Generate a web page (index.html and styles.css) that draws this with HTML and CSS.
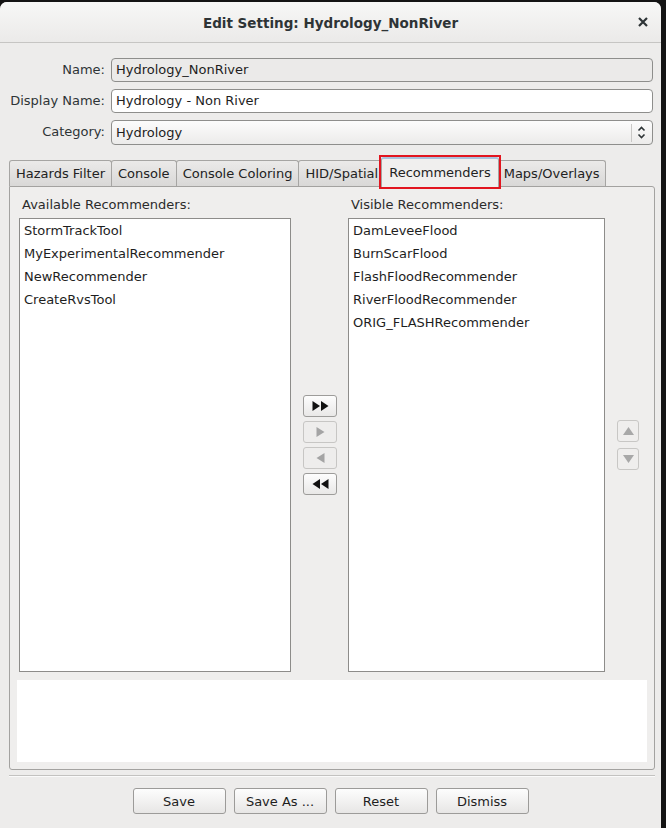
FILE: index.html
```html
<!DOCTYPE html>
<html lang="en">
<head>
    <meta charset="UTF-8">
    <title>Edit Setting: Hydrology_NonRiver</title>
    <link rel="stylesheet" href="styles.css">
</head>
<body>

    <div class="dialog">
        <div class="titlebar">
            <span></span>
            <span class="title">Edit Setting: Hydrology_NonRiver</span>
            <svg class="close" width="10" height="10" viewBox="0 0 10 10">
                <path d="M1 1 L9 9 M9 1 L1 9" stroke="#2e3436" stroke-width="2.2"/>
            </svg>
        </div>

        <div class="form">
            <label>Name:</label>
            <div class="field disabled">Hydrology_NonRiver</div>
            <label>Display Name:</label>
            <div class="field">Hydrology - Non River</div>
            <label>Category:</label>
            <div class="field combo">
                <span class="combo-text">Hydrology</span>
                <span class="combo-sep"></span>
                <svg class="combo-arrows" width="9" height="15" viewBox="0 0 9 15">
                    <path d="M1.5 5.5 L4.5 2.5 L7.5 5.5" fill="none" stroke="#2e3436" stroke-width="1.6"/>
                    <path d="M1.5 9.5 L4.5 12.5 L7.5 9.5" fill="none" stroke="#2e3436" stroke-width="1.6"/>
                </svg>
            </div>
        </div>

        <div class="tabbar">
            <div class="tab">Hazards Filter</div>
            <div class="tab">Console</div>
            <div class="tab">Console Coloring</div>
            <div class="tab">HID/Spatial</div>
            <div class="tab selected">Recommenders<span class="highlight"></span></div>
            <div class="tab">Maps/Overlays</div>
        </div>

        <div class="panel">
            <div class="lists">
                <div class="list-label">Available Recommenders:</div>
                <div></div>
                <div class="list-label">Visible Recommenders:</div>
                <div></div>

                <ul class="list">
                    <li>StormTrackTool</li>
                    <li>MyExperimentalRecommender</li>
                    <li>NewRecommender</li>
                    <li>CreateRvsTool</li>
                </ul>

                <div class="move-buttons">
                    <button class="arrow-btn">
                        <svg width="17" height="10" viewBox="0 0 17 10"><polygon points="0.5,0 8,5 0.5,10" fill="#111"/><polygon points="9,0 16.5,5 9,10" fill="#111"/></svg>
                    </button>
                    <button class="arrow-btn off">
                        <svg width="9" height="10" viewBox="0 0 9 10"><polygon points="0.5,0 8.5,5 0.5,10" fill="#a4a4a4"/></svg>
                    </button>
                    <button class="arrow-btn off">
                        <svg width="9" height="10" viewBox="0 0 9 10"><polygon points="8.5,0 0.5,5 8.5,10" fill="#a4a4a4"/></svg>
                    </button>
                    <button class="arrow-btn">
                        <svg width="17" height="10" viewBox="0 0 17 10"><polygon points="8,0 0.5,5 8,10" fill="#111"/><polygon points="16.5,0 9,5 16.5,10" fill="#111"/></svg>
                    </button>
                </div>

                <ul class="list">
                    <li>DamLeveeFlood</li>
                    <li>BurnScarFlood</li>
                    <li>FlashFloodRecommender</li>
                    <li>RiverFloodRecommender</li>
                    <li>ORIG_FLASHRecommender</li>
                </ul>

                <div class="order-buttons">
                    <button class="order-btn">
                        <svg width="11" height="8" viewBox="0 0 11 8"><polygon points="5.5,0 11,8 0,8" fill="#a8a8a8"/></svg>
                    </button>
                    <button class="order-btn">
                        <svg width="11" height="8" viewBox="0 0 11 8"><polygon points="0,0 11,0 5.5,8" fill="#a8a8a8"/></svg>
                    </button>
                </div>
            </div>

            <div class="notes"></div>
        </div>

        <div class="separator"></div>

        <div class="actions">
            <button class="btn">Save</button>
            <button class="btn">Save As ...</button>
            <button class="btn">Reset</button>
            <button class="btn">Dismiss</button>
        </div>
    </div>

</body>
</html>
```

FILE: styles.css
```css
* {
    margin: 0;
    padding: 0;
    box-sizing: border-box;
}

body {
    font-family: 'DejaVu Sans', 'Liberation Sans', sans-serif;
    font-size: 13px;
    color: #2e3436;
    background-color: #141414;
    overflow: hidden;
}

/* Dialog frame */
.dialog {
    width: 661px;
    height: 826px;
    margin-top: 2px;
    background: #edeceb;
    border-radius: 7px 7px 0 0;
    overflow: hidden;
}

.titlebar {
    height: 41px;
    display: grid;
    grid-template-columns: 1fr auto 1fr;
    align-items: center;
    background: linear-gradient(#f7f7f6, #ebeae9);
    border-bottom: 1px solid #c6c5c3;
}

.title {
    font-weight: bold;
    font-size: 13.5px;
    color: #2e3436;
    padding-top: 1px;
}

.close {
    justify-self: end;
    margin-right: 13px;
}

/* Name / Display Name / Category */
.form {
    display: grid;
    grid-template-columns: 105px 1fr;
    column-gap: 6px;
    row-gap: 7px;
    padding: 15px 8px 0 0;
}

.form label {
    text-align: right;
    line-height: 24px;
}

.field {
    height: 24px;
    line-height: 22px;
    padding: 0 4px;
    background: #fff;
    border: 1px solid #8e8e8c;
    border-radius: 4px;
    color: #1e1e1e;
}

.field.disabled {
    background: #ebeae9;
}

.combo {
    height: 25px;
    display: flex;
    align-items: center;
    background: linear-gradient(#fcfcfc, #ecebea);
    padding-right: 6px;
}

.combo-text {
    flex: 1;
}

.combo-sep {
    width: 1px;
    height: 18px;
    background: #c9c8c6;
    margin-right: 5px;
}

/* Tabs */
.tabbar {
    display: flex;
    align-items: flex-end;
    height: 31px;
    margin: 10px 0 0 9px;
}

.tab {
    position: relative;
    height: 26px;
    line-height: 25px;
    padding: 0 6px;
    margin-right: -1px;
    background: linear-gradient(#ebeae9, #d9d8d7);
    border: 1px solid #a6a5a3;
    border-bottom: none;
    border-radius: 3px 3px 0 0;
    color: #222;
}

.tab.selected {
    z-index: 1;
    height: 30px;
    line-height: 27px;
    margin: 0 -1px -1px -3px;
    padding: 0 7px;
    background: #f0efee;
    border-top: 2px solid #a9c2dc;
}

.tab.selected + .tab {
    margin-left: 0;
    padding: 0 5px;
}

.highlight {
    position: absolute;
    left: -3px;
    right: -3px;
    top: -4px;
    bottom: -2px;
    border: 2px solid #e2151f;
}

/* Tab content */
.panel {
    margin: 0 6px 0 9px;
    padding: 9px 7px 7px 7px;
    background: #efeeed;
    border: 1px solid #a3a2a0;
    border-radius: 0 3px 3px 3px;
}

.lists {
    display: grid;
    grid-template-columns: 272px 57px 257px 1fr;
    grid-template-rows: 18px 454px;
    row-gap: 4px;
    margin-left: 2px;
}

.list-label {
    line-height: 18px;
    padding-left: 3px;
    color: #2b2b2b;
}

.list {
    list-style: none;
    background: #fff;
    border: 1px solid #8d8c8a;
}

.list li {
    height: 23px;
    line-height: 23px;
    padding-left: 4px;
    color: #1e1e1e;
}

.move-buttons {
    align-self: center;
    display: flex;
    flex-direction: column;
    gap: 4px;
    padding-left: 12px;
}

.arrow-btn {
    width: 34px;
    height: 22px;
    display: flex;
    align-items: center;
    justify-content: center;
    background: linear-gradient(#fdfdfd, #e9e8e7);
    border: 1px solid #9d9c9a;
    border-radius: 3px;
}

.arrow-btn.off {
    background: #eeedec;
    border-color: #c7c6c4;
}

.order-buttons {
    align-self: center;
    display: flex;
    flex-direction: column;
    gap: 6px;
    padding-left: 12px;
}

.order-btn {
    width: 22px;
    height: 22px;
    display: flex;
    align-items: center;
    justify-content: center;
    background: #efeeed;
    border: 1px solid #c8c7c5;
    border-radius: 3px;
}

.notes {
    height: 82px;
    margin-top: 8px;
    background: #fff;
}

/* Bottom */
.separator {
    height: 2px;
    margin: 5px 6px 0 9px;
    border-top: 1px solid #c3c2c0;
    border-bottom: 1px solid #fafafa;
}

.actions {
    display: flex;
    justify-content: center;
    gap: 8px;
    margin-top: 11px;
}

.btn {
    width: 93px;
    height: 26px;
    font-family: 'DejaVu Sans', sans-serif;
    font-size: 13px;
    color: #1e1e1e;
    background: linear-gradient(#fdfdfd, #e7e6e5);
    border: 1px solid #9c9b99;
    border-radius: 3px;
}
```
